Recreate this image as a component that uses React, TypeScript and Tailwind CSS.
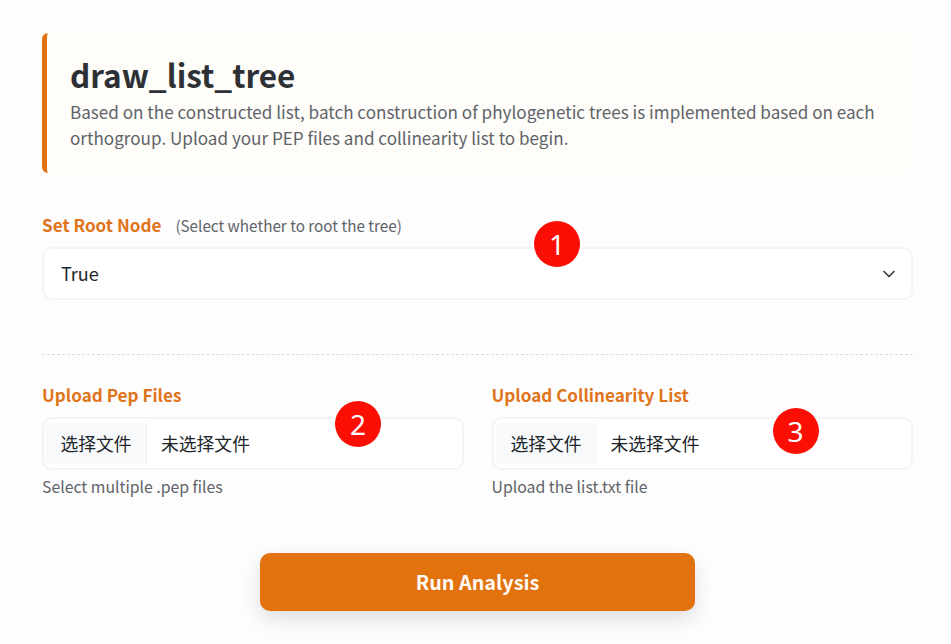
import type { ReactNode } from "react";
import { ChevronDown } from "lucide-react";

function Marker({ n, className }: { n: number; className: string }) {
  return (
    <span
      className={`absolute flex h-[46px] w-[46px] items-center justify-center rounded-full bg-[#fb0f05] font-['Noto_Sans',sans-serif] text-[28px] leading-none font-normal text-white ${className}`}
    >
      {n}
    </span>
  );
}

function FileField({
  label,
  hint,
  divider,
  marker,
}: {
  label: string;
  hint: string;
  divider: boolean;
  marker: ReactNode;
}) {
  return (
    <div className="relative">
      <div className="text-[17.1px] leading-[24px] font-semibold text-[#e0741a]">{label}</div>
      <div className="mt-[10px] flex h-[53px] items-center rounded-[10px] border-2 border-[#f4f4f6] bg-white pl-[2px]">
        <span
          className={`flex h-[41px] w-[101px] items-center justify-center bg-[#f8f9fa] text-[17.8px] text-[#212529] ${divider ? "border-r border-[#eceef0]" : ""}`}
        >
          选择文件
        </span>
        <span className="ml-[14px] text-[17.8px] text-[#212529]">未选择文件</span>
      </div>
      <div className="mt-[5px] text-[15.8px] leading-[24px] text-[#5f6368]">{hint}</div>
      {marker}
    </div>
  );
}

export default function App() {
  return (
    <div className="h-[644px] overflow-hidden bg-[#fdfdfe] pt-[33px] pr-[38px] pl-[42px]">
      <div className="font-['Noto_Sans_CJK_SC',sans-serif]">
        {/* header */}
        <div className="h-[140px] rounded-[6px] border-l-[5px] border-[#e2720f] bg-[#fefdfa] pt-[21px] pl-[23px]">
          <h1 className="text-[31.5px] leading-[40px] font-semibold text-[#2d3035]">draw_list_tree</h1>
          <p className="mt-[5px] pr-[30px] text-[17.1px] leading-[26px] text-[#5f6368]">
            Based on the constructed list, batch construction of phylogenetic trees is implemented based on each
            orthogroup. Upload your PEP files and collinearity list to begin.
          </p>
        </div>

        {/* root node */}
        <div className="relative mt-[40px]">
          <div className="flex h-[24px] items-center">
            <span className="text-[17.1px] font-semibold text-[#e0741a]">Set Root Node</span>
            <span className="ml-[14px] text-[15.25px] text-[#5f6368]">(Select whether to root the tree)</span>
          </div>
          <div className="mt-[10px] flex h-[53px] items-center justify-between rounded-[10px] border-2 border-[#f4f4f6] bg-white pr-[12px] pl-[17px]">
            <span className="text-[18px] text-[#212529]">True</span>
            <ChevronDown size={20} strokeWidth={2} className="text-[#343a40]" />
          </div>
          <Marker n={1} className="top-[8px] left-[492px]" />
        </div>

        <div className="mt-[54px] border-t border-dashed border-[#dcdcdc]" />

        {/* uploads */}
        <div className="mt-[28px] grid grid-cols-2 gap-[28px]">
          <FileField
            label="Upload Pep Files"
            hint="Select multiple .pep files"
            divider
            marker={<Marker n={2} className="top-[18px] left-[293px]" />}
          />
          <FileField
            label="Upload Collinearity List"
            hint="Upload the list.txt file"
            divider={false}
            marker={<Marker n={3} className="top-[25px] left-[281px]" />}
          />
        </div>

        <div className="mt-[54px] flex justify-center">
          <button className="h-[58px] w-[435px] rounded-[10px] bg-[#e2720d] text-[19.8px] font-semibold text-[#fffaf5] shadow-[0_8px_20px_rgba(0,0,0,0.12)]">
            Run Analysis
          </button>
        </div>
      </div>
    </div>
  );
}
